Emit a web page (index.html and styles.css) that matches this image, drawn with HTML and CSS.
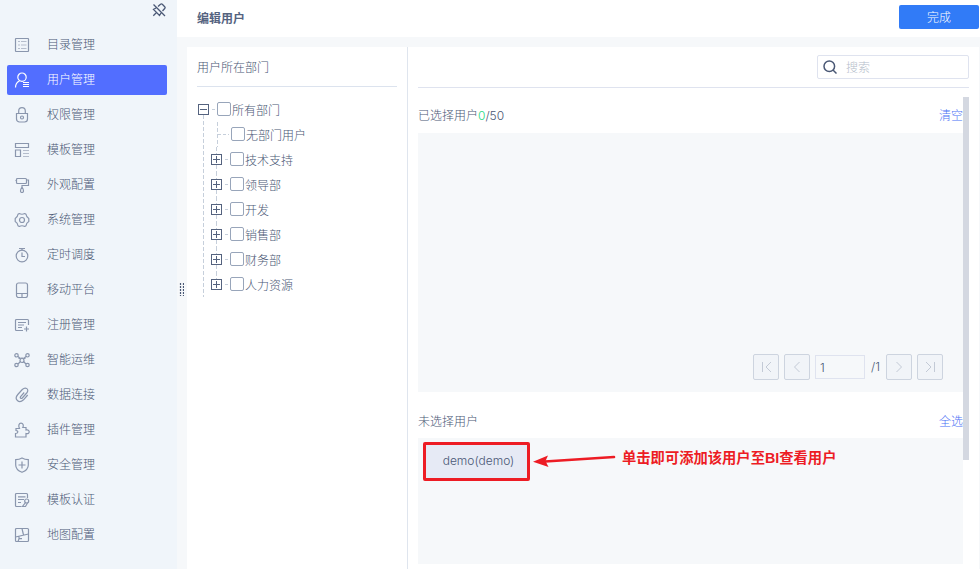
FILE: index.html
```html
<!DOCTYPE html>
<html lang="zh-CN">
<head>
    <meta charset="UTF-8">
    <meta name="viewport" content="width=device-width, initial-scale=1.0">
    <title>编辑用户</title>
    <link rel="stylesheet" href="styles.css">
</head>
<body>
    <div class="app">
        <!-- Sidebar -->
        <div class="sidebar">
            <div class="pin">
                <svg width="14" height="14" viewBox="0 0 14 14"><path d="M1.5 1.5l11.5 11.5M6 3.500l2.500-2.200c.6-.6 1.200-.6 1.800 0l2.400 2.400c.6.6.6 1.200 0 1.800L10.500 8M4 5L1.500 6.500l6 6L9 10M4.500 9.500L1.300 12.700"/></svg>
            </div>
            <ul class="menu">
                <li>
                    <svg viewBox="0 0 16 16"><rect x="1.500" y="1.500" width="13" height="13" rx=".5"/><path d="M4 4.500h2M4 8h2M4 11.500h2M7 4.500h5.500M7 8h5.500M7 11.500h5.500" class="soft"/></svg>
                    <span>目录管理</span>
                </li>
                <li class="active">
                    <svg viewBox="0 0 16 16"><circle cx="8" cy="5.200" r="4.200"/><path d="M5.500 9C3 10 1.500 12.500 1.500 15.500M9 10.500h6M9 12.500h6M9 14.500h6"/></svg>
                    <span>用户管理</span>
                </li>
                <li>
                    <svg viewBox="0 0 16 16"><path d="M2.500 6.500h11v5.500a3 3 0 0 1-3 3h-5a3 3 0 0 1-3-3zM4.700 6.300V4a3.300 3.300 0 0 1 6.600 0v2.300"/><circle cx="8" cy="10.500" r="1.500"/></svg>
                    <span>权限管理</span>
                </li>
                <li>
                    <svg viewBox="0 0 16 16"><path d="M1.500 1.500h13v4h-13zM1.500 8h5v6.500h-5z"/><path d="M9 8.500h6M9 11.500h6M9 14.500h6" class="soft"/></svg>
                    <span>模板管理</span>
                </li>
                <li>
                    <svg viewBox="0 0 16 16"><rect x="2.500" y="1.500" width="10" height="5" rx="1"/><path d="M2.500 3.500h-1M12.500 3h2v5.500H8v1.500M8 10c-1 1.500-1.500 2.500-1.500 4 0 2 3 2 3 0 0-1.500-.5-2.500-1.500-4z"/></svg>
                    <span>外观配置</span>
                </li>
                <li>
                    <svg viewBox="0 0 16 16"><path d="M5.300 1.500Q8 3 10.700 1.500L12 2.300Q12.300 5 14.800 6.500v3Q12.300 11 12 13.700L10.700 14.500Q8 13 5.300 14.500L4 13.700Q3.700 11 1.200 9.500v-3Q3.700 5 4 2.300z" stroke-linejoin="round"/><circle cx="8" cy="8" r="2.500"/></svg>
                    <span>系统管理</span>
                </li>
                <li>
                    <svg viewBox="0 0 16 16"><circle cx="8" cy="9" r="5.800"/><path d="M5 1.500h6M8 1.500v2M8 5.500V9.500h3"/></svg>
                    <span>定时调度</span>
                </li>
                <li>
                    <svg viewBox="0 0 16 16"><rect x="2.500" y="1" width="11" height="14.500" rx="2"/><path d="M2.500 11.500h11M8 12v3"/></svg>
                    <span>移动平台</span>
                </li>
                <li>
                    <svg viewBox="0 0 16 16"><path d="M9 13.500H2.500a1 1 0 0 1-1-1v-9a1 1 0 0 1 1-1h11a1 1 0 0 1 1 1V8M4 5.500h8M4 8h6M4 10.500h4M12.500 9.500v5M10 12h5"/></svg>
                    <span>注册管理</span>
                </li>
                <li>
                    <svg viewBox="0 0 16 16"><circle cx="2.500" cy="3.300" r="1.700"/><circle cx="13.500" cy="3.300" r="1.700"/><circle cx="2.500" cy="13" r="1.700"/><circle cx="13.500" cy="13" r="1.700"/><circle cx="8" cy="8.500" r="2"/><path d="M4 4.500l2.500 2.300M12 4.500L9.500 6.800M4 12l2.500-2.500M12 12L9.500 9.500M4.500 6.500L8 6l3.500.5"/></svg>
                    <span>智能运维</span>
                </li>
                <li>
                    <svg viewBox="0 0 16 16"><path d="M10.200 5.500L6.600 9.600c-.9 1.300.6 2.500 1.700 1.400l4.400-5C15.800 2.200 11.500-.7 8.300 2.500L3.800 7.500c-4.200 4.800 1.200 9.600 5.700 5.300L13.700 8"/></svg>
                    <span>数据连接</span>
                </li>
                <li>
                    <svg viewBox="0 0 16 16"><path d="M2 6.500h3.500C4 3.500 5 1.200 7 1.200s3 2.300 1.800 4.300H12V8c2-.5 3.200.3 3.200 1.800S14 12 12 11.500V15H1.500v-3.500c3 0 3-3 .5-3z"/></svg>
                    <span>插件管理</span>
                </li>
                <li>
                    <svg viewBox="0 0 16 16"><path d="M8 1c2 1.200 4 1.700 6.300 1.700V8c0 3.500-3 6-6.300 7.300C4.700 14 1.700 11.500 1.700 8V2.700C4 2.700 6 2.200 8 1zM8 4.500v7M4.500 8h7"/></svg>
                    <span>安全管理</span>
                </li>
                <li>
                    <svg viewBox="0 0 16 16"><path d="M7.500 14.500h-5a1 1 0 0 1-1-1v-11a1 1 0 0 1 1-1h10a1 1 0 0 1 1 1V6M4 4.800h7.500M4 7.500h6M4 10.500h3"/><circle cx="12.700" cy="9" r="2"/><path d="M11.500 10.500l-3 4h3l2-3.500"/></svg>
                    <span>模板认证</span>
                </li>
                <li>
                    <svg viewBox="0 0 16 16"><rect x="1.500" y="1.500" width="13" height="13" rx="1"/><path d="M1.500 10l13-3M8 1.500l1.500 6.500M5 9.200v2.500h3M5 11.700l-1 2.800"/></svg>
                    <span>地图配置</span>
                </li>
            </ul>
        </div>

        <!-- Main -->
        <div class="main">
            <div class="header">
                <h1>编辑用户</h1>
                <button class="done">完成</button>
            </div>

            <div class="content">
                <div class="splitter">
                    <svg width="5" height="13" viewBox="0 0 5 13"><path d="M1.500 0v13M4.500 0v13"/></svg>
                </div>

                <!-- Departments -->
                <div class="departments">
                    <div class="panel-title">用户所在部门</div>
                    <div class="tree">
                        <div class="node root"><i class="toggle minus"></i><i class="dash"></i><i class="check"></i><span>所有部门</span></div>
                        <ul class="children">
                            <li class="node leaf"><i class="dash"></i><i class="check"></i><span>无部门用户</span></li>
                            <li class="node"><i class="toggle"></i><i class="dash"></i><i class="check"></i><span>技术支持</span></li>
                            <li class="node"><i class="toggle"></i><i class="dash"></i><i class="check"></i><span>领导部</span></li>
                            <li class="node"><i class="toggle"></i><i class="dash"></i><i class="check"></i><span>开发</span></li>
                            <li class="node"><i class="toggle"></i><i class="dash"></i><i class="check"></i><span>销售部</span></li>
                            <li class="node"><i class="toggle"></i><i class="dash"></i><i class="check"></i><span>财务部</span></li>
                            <li class="node last"><i class="toggle"></i><i class="dash"></i><i class="check"></i><span>人力资源</span></li>
                        </ul>
                    </div>
                </div>

                <!-- Users -->
                <div class="users">
                    <div class="search-row">
                        <div class="search">
                            <svg width="14" height="14" viewBox="0 0 14 14"><circle cx="6.300" cy="6.300" r="5.300"/><path d="M10 10l3.500 3.500"/></svg>
                            <span>搜索</span>
                        </div>
                    </div>
                    <div class="scroll-area">
                        <div class="lists">
                            <div class="list-head selected-head">
                                <span>已选择用户<em>0</em><b>/50</b></span>
                                <a href="#">清空</a>
                            </div>
                            <div class="list selected-list">
                                <div class="pager">
                                    <button><svg viewBox="0 0 12 12"><path d="M2.500 1v10M11 1L6 6l5 5"/></svg></button>
                                    <button><svg viewBox="0 0 12 12"><path d="M8.500 1l-5 5 5 5"/></svg></button>
                                    <span class="page">1</span>
                                    <span class="total">/1</span>
                                    <button><svg viewBox="0 0 12 12"><path d="M3.500 1l5 5-5 5"/></svg></button>
                                    <button><svg viewBox="0 0 12 12"><path d="M10.500 1v10M2 1l5 5-5 5"/></svg></button>
                                </div>
                            </div>
                            <div class="list-head other-head">
                                <span>未选择用户</span>
                                <a href="#">全选</a>
                            </div>
                            <div class="list other-list">
                                <div class="user">demo(demo)</div>
                                <svg class="arrow" width="84" height="18" viewBox="0 0 84 18"><path class="line" d="M12 9.500L81 5"/><path class="head" d="M0 9.800L15 3.500l-2.500 5.500 3 6z"/></svg>
                                <div class="note">单击即可添加该用户至BI查看用户</div>
                            </div>
                        </div>
                        <div class="scrollbar"></div>
                    </div>
                </div>
            </div>
        </div>
    </div>
</body>
</html>
```
FILE: styles.css
```css
/* General Reset */
* {
    margin: 0;
    padding: 0;
    box-sizing: border-box;
}

body {
    font-family: 'Noto Sans CJK SC', sans-serif;
    font-size: 12px;
    font-weight: 300;
    line-height: 18px;
    color: #4a5875;
    background-color: #f6f8fa;
    overflow: hidden;
}

ul {
    list-style: none;
}

svg {
    display: block;
    fill: none;
    stroke: currentColor;
}

a {
    color: #4a72f5;
    text-decoration: none;
}

.app {
    display: flex;
    height: 569px;
}

/* Sidebar */
.sidebar {
    width: 177px;
    background-color: #f0f5fa;
    padding: 3px 10px 0 7px;
}

.pin {
    display: flex;
    justify-content: flex-end;
    padding-right: 1px;
    height: 27px;
}

.pin svg {
    stroke-width: 1.3;
}

.menu {
    display: flex;
    flex-direction: column;
    gap: 5px;
}

.menu li {
    display: flex;
    align-items: center;
    gap: 17px;
    height: 30px;
    padding-left: 7px;
    border-radius: 2px;
}

.menu span {
    padding-bottom: 2px;
}

.menu svg {
    width: 16px;
    height: 16px;
    color: #8a96ad;
    stroke-width: 1.2;
}

.menu .soft {
    stroke: #b5bdcc;
}

.menu .active {
    background-color: #526eff;
    color: #fff;
}

.menu .active svg {
    color: #fff;
}

/* Header */
.main {
    flex: 1;
    display: flex;
    flex-direction: column;
}

.header {
    display: flex;
    justify-content: space-between;
    height: 37px;
    padding: 5px 1px 0 20px;
    background-color: #fff;
}

.header h1 {
    font-size: 12px;
    font-weight: 700;
    line-height: 25px;
    color: #55637f;
}

.done {
    width: 80px;
    height: 24px;
    border: none;
    border-radius: 2px;
    background-color: #317bf7;
    color: #fff;
    font: inherit;
}

.content {
    flex: 1;
    display: flex;
    padding: 10px 1px 0 0;
}

.splitter {
    width: 10px;
    padding: 236px 0 0 2px;
}

.splitter path {
    stroke-width: 1.2;
    stroke-dasharray: 2 1;
}

/* Departments */
.departments {
    width: 221px;
    padding: 0 10px;
    background-color: #fff;
    border-right: 1px solid #dfe5ee;
}

.panel-title {
    height: 40px;
    line-height: 39px;
    border-bottom: 1px solid #dce3ee;
}

.tree {
    padding-top: 10px;
}

.node {
    display: flex;
    align-items: center;
    height: 25px;
}

.toggle {
    width: 11px;
    height: 11px;
    border: 1px solid #55637f;
    background: linear-gradient(#55637f, #55637f) center / 7px 1px no-repeat,
                linear-gradient(#55637f, #55637f) center / 1px 7px no-repeat, #fff;
}

.toggle.minus {
    background: linear-gradient(#55637f, #55637f) center / 7px 1px no-repeat;
}

.dash {
    width: 3px;
    height: 1px;
    margin: 0 2px 0 3px;
    background-color: #c6cfdb;
}

.check {
    width: 14px;
    height: 14px;
    margin: -1px 1px 0 0;
    border: 1px solid #98a5ba;
    border-radius: 2px;
}

.root {
    padding-left: 1px;
}

/* The trunk starts right under the root toggle */
.children {
    margin: -7px 0 0 6px;
    padding: 7px 0 0 8px;
    background: repeating-linear-gradient(#c6cfdb 0 4px, transparent 4px 6px) left top / 1px 100% no-repeat;
}

.children .node {
    background: repeating-linear-gradient(#c6cfdb 0 4px, transparent 4px 6px) 5px 0 / 1px 100% no-repeat;
}

.children .last {
    background-size: 1px 10px;
}

.children .leaf {
    padding-left: 7px;
    background-position: 6px 0;
}

.children .leaf .dash {
    width: 11px;
    margin: 0 2px 0 0;
    background: repeating-linear-gradient(90deg, #c6cfdb 0 3px, transparent 3px 5px);
}

/* Users */
.users {
    flex: 1;
    display: flex;
    flex-direction: column;
    padding: 0 10px;
    background-color: #fff;
}

.search-row {
    display: flex;
    justify-content: flex-end;
    height: 41px;
    padding-top: 8px;
    border-bottom: 1px solid #dfe3ef;
}

.search {
    display: flex;
    align-items: center;
    gap: 9px;
    width: 152px;
    height: 24px;
    padding-left: 5px;
    border: 1px solid #dfe3ef;
    border-radius: 2px;
}

.search svg {
    stroke-width: 1.5;
}

.search span {
    color: #b4bdca;
}

.scroll-area {
    display: flex;
    height: 476px;
    padding-top: 9px;
}

.lists {
    flex: 1;
}

.list-head {
    display: flex;
    justify-content: space-between;
    align-items: center;
}

.list-head em,
.list-head b,
.total,
.page,
.user {
    font-family: Inter, 'Noto Sans CJK SC', sans-serif;
    font-weight: 300;
}

.list-head em {
    font-style: normal;
    color: #2bd985;
}

.selected-head {
    height: 36px;
}

.other-head {
    height: 46px;
    padding-top: 12px;
}

.list {
    background-color: #f6f8fa;
}

.selected-list {
    display: flex;
    align-items: flex-end;
    justify-content: flex-end;
    height: 259px;
    padding: 0 20px 12px 0;
}

.pager {
    display: flex;
    align-items: center;
}

.pager button {
    display: flex;
    align-items: center;
    justify-content: center;
    width: 26px;
    height: 26px;
    margin-right: 5px;
    border: 1px solid #cdd4df;
    border-radius: 2px;
    background-color: #f1f4f8;
    color: #c3cad6;
}

.pager button:last-child {
    margin-right: 0;
}

.pager svg {
    width: 12px;
    height: 12px;
}

.page {
    width: 50px;
    height: 24px;
    padding-left: 4px;
    line-height: 23px;
    border: 1px solid #dfe3ef;
}

.total {
    width: 21px;
    padding-left: 6px;
}

.other-list {
    display: flex;
    align-items: flex-start;
    height: 126px;
    padding: 4px 0 0 5px;
}

.user {
    width: 107px;
    height: 39px;
    padding-left: 4px;
    border: 3px solid #ed1c24;
    border-radius: 2px;
    background-color: #e6eaf5;
    text-align: center;
    line-height: 32px;
}

.arrow {
    margin: 10px 0 0 3px;
    color: #ed1c24;
}

.arrow .line {
    stroke-width: 2.6;
    stroke-linecap: round;
}

.arrow .head {
    fill: currentColor;
    stroke: none;
}

.note {
    margin: 7px 0 0 5px;
    font-family: 'Liberation Sans', 'Noto Sans CJK SC', sans-serif;
    font-size: 14.3px;
    font-weight: 700;
    color: #ed1c24;
    white-space: nowrap;
}

.scrollbar {
    width: 6px;
    height: 363px;
    background-color: #d4d8e1;
}
```
